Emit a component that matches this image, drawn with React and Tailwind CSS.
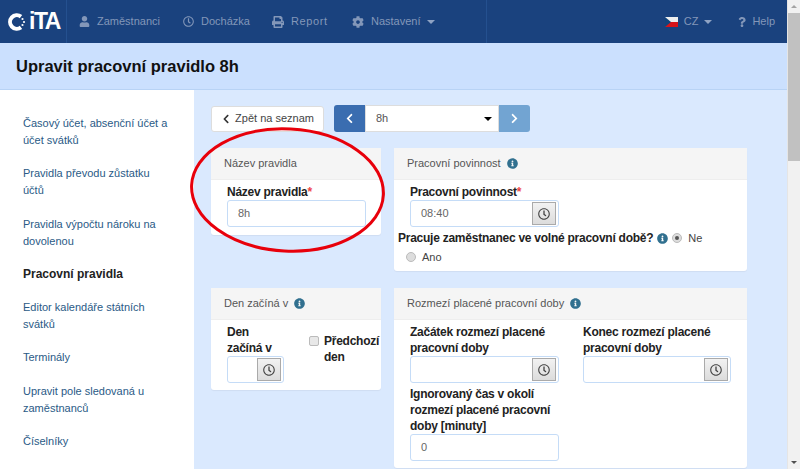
import { FaUser, FaRegClock, FaPrint, FaCog, FaQuestion, FaInfoCircle, FaChevronLeft, FaChevronRight } from 'react-icons/fa';

const Caret = ({ className = 'border-t-[#8fa3c4]' }) => (
  <span className={`inline-block w-0 h-0 border-x-[4px] border-x-transparent border-t-[4px] ${className}`} />
);

const Logo = () => (
  <div className="flex items-center gap-[3px] pl-[8px] w-[66px] h-full">
    <svg width="18" height="18" viewBox="0 0 18 18">
      <path d="M13 3.6 A6.8 6.8 0 1 0 13 14.4" fill="none" stroke="#fff" strokeWidth="4" />
      <circle cx="14.5" cy="6" r="1.1" fill="#fff" />
      <circle cx="16" cy="9" r="1.1" fill="#fff" />
      <circle cx="14.5" cy="12" r="1.1" fill="#fff" />
    </svg>
    <span className="text-white font-bold text-[23px] leading-none tracking-[-1.5px]">iTA</span>
  </div>
);

const NavItem = ({ icon, children, className = '' }) => (
  <div className={`flex items-center gap-[7px] text-[11px] text-[#8397b9] ${className}`}>
    {icon}
    <span>{children}</span>
  </div>
);

const TopNav = () => (
  <nav className="flex items-center h-[43px] bg-[#1a427e] shrink-0">
    <div className="border-r border-[#24508f] h-full">
      <Logo />
    </div>
    <div className="flex items-center h-full w-[420px] border-r border-[#24508f] pl-[12px]">
      <NavItem icon={<FaUser className="w-[11px] h-[11px]" />} className="w-[104px]">Zaměstnanci</NavItem>
      <NavItem icon={<FaRegClock className="w-[11px] h-[11px]" />} className="w-[89px]">Docházka</NavItem>
      <NavItem icon={<FaPrint className="w-[12px] h-[12px]" />} className="w-[80px]">
        <span className="tracking-[0.6px]">Report</span>
      </NavItem>
      <NavItem icon={<FaCog className="w-[12px] h-[12px]" />}>
        <span className="inline-flex items-center gap-[6px]">Nastavení <Caret /></span>
      </NavItem>
    </div>
    <div className="flex-1 flex items-center justify-end h-full pr-[12px]">
      <div className="flex items-center gap-[6px] text-[11px] text-[#8397b9]">
        <span className="relative w-[13px] h-[10px] bg-[linear-gradient(#eee_50%,#d7141a_50%)] overflow-hidden">
          <span className="absolute left-0 top-0 w-0 h-0 border-y-[5px] border-y-transparent border-l-[6px] border-l-[#11457e]" />
        </span>
        <span className="inline-flex items-center gap-[6px]">CZ <Caret /></span>
      </div>
      <div className="flex items-center gap-[6px] ml-[26px] text-[11px] text-[#8397b9]">
        <FaQuestion className="w-[8px] h-[10px]" />
        <span>Help</span>
      </div>
    </div>
  </nav>
);

const sideItems = [
  'Časový účet, absenční účet a účet svátků',
  'Pravidla převodu zůstatku účtů',
  'Pravidla výpočtu nároku na dovolenou',
  'Pracovní pravidla',
  'Editor kalendáře státních svátků',
  'Terminály',
  'Upravit pole sledovaná u zaměstnanců',
  'Číselníky',
];

const Sidebar = () => (
  <aside className="w-[194px] shrink-0 bg-white pl-[23px] pr-[21px] pt-[25px] flex flex-col gap-[16.3px] text-[11px] leading-[17px]">
    {sideItems.map((item) => (
      <a key={item} className={item === 'Pracovní pravidla' ? 'font-bold text-[12px] text-[#222]' : 'text-[#2a5a86]'}>
        {item}
      </a>
    ))}
  </aside>
);

const Panel = ({ title, info, children, className = '' }) => (
  <section className={`bg-white rounded-[3px] shadow-[0_1px_1px_rgba(0,0,0,0.05)] ${className}`}>
    <header className="h-[32px] bg-[#f5f5f5] border-b border-[#eee] flex items-center gap-[6px] px-[13px] text-[11px] text-[#555]">
      {title}
      {info && <FaInfoCircle className="w-[11px] h-[11px] text-[#31708f]" />}
    </header>
    {children}
  </section>
);

const Label = ({ children, required, className = '' }) => (
  <label className={`block font-bold text-[12px] leading-[16px] tracking-[-0.25px] text-[#222] ${className}`}>
    {children}
    {required && <span className="text-[#e44]">*</span>}
  </label>
);

const TextBox = ({ value, className = '' }) => (
  <div className={`h-[27px] border border-[#c5dcf7] rounded-[3px] bg-white flex items-center px-[10px] text-[11px] text-[#666] ${className}`}>
    {value}
  </div>
);

const TimeBox = ({ value, className = '' }) => (
  <div className={`h-[27px] border border-[#c5dcf7] rounded-[3px] bg-white flex items-center justify-between pl-[10px] pr-[2px] text-[11px] text-[#666] ${className}`}>
    <span>{value}</span>
    <span className="w-[24px] h-[23px] bg-[linear-gradient(#f2f2f2,#dcdcdc)] border border-[#aaa] flex items-center justify-center text-[#444]">
      <FaRegClock className="w-[12px] h-[12px]" />
    </span>
  </div>
);

const Radio = ({ checked }) => (
  <span className="w-[10px] h-[10px] rounded-full bg-[#ddd] border border-[#bbb] flex items-center justify-center shrink-0">
    {checked && <span className="w-[4px] h-[4px] rounded-full bg-[#555]" />}
  </span>
);

const Toolbar = () => (
  <div className="flex items-center h-[27px] mb-[16px]">
    <button className="h-[26px] w-[113px] bg-white border border-[#ddd] rounded-[3px] flex items-center justify-center gap-[4px] text-[11px] text-[#444] mr-[10px]">
      <FaChevronLeft className="w-[10px] h-[10px] text-[#333]" />
      Zpět na seznam
    </button>
    <button className="h-[27px] w-[31px] bg-[#3a6db0] rounded-l-[3px] flex items-center justify-center text-white">
      <FaChevronLeft className="w-[11px] h-[11px]" />
    </button>
    <div className="h-[27px] w-[134px] bg-white border border-[#ddd] flex items-center justify-between pl-[10px] pr-[6px] text-[11px] text-[#555]">
      8h
      <Caret className="border-t-black" />
    </div>
    <button className="h-[27px] w-[31px] bg-[#72a4d2] rounded-r-[3px] flex items-center justify-center text-white">
      <FaChevronRight className="w-[11px] h-[11px]" />
    </button>
  </div>
);

const Content = () => (
  <main className="flex-1 bg-[#dae9fe] pl-[17px] pt-[15px] overflow-hidden">
    <Toolbar />
    <div className="grid grid-cols-[170px_353px] gap-x-[13px] gap-y-[17px] items-start">
      <Panel title="Název pravidla">
        <div className="px-[16px] pt-[4px] pb-[8px]">
          <Label required>Název pravidla</Label>
          <TextBox value="8h" className="w-[139px]" />
        </div>
      </Panel>

      <Panel title="Pracovní povinnost" info className="h-[123px]">
        <div className="pt-[4px]">
          <div className="px-[16px]">
            <Label required>Pracovní povinnost</Label>
            <TimeBox value="08:40" className="w-[149px]" />
          </div>
          <div className="pl-[4px] mt-[3px] flex items-center gap-[4px] h-[16px]">
            <Label>Pracuje zaměstnanec ve volné pracovní době?</Label>
            <FaInfoCircle className="w-[11px] h-[11px] text-[#31708f]" />
            <Radio checked />
            <span className="text-[11px] text-[#444] ml-[2px]">Ne</span>
          </div>
          <div className="pl-[12px] mt-[3px] flex items-center gap-[6px] text-[11px] text-[#444]">
            <Radio />
            Ano
          </div>
        </div>
      </Panel>

      <Panel title="Den začíná v" info className="h-[102px]">
        <div className="flex pl-[16px] pt-[4px]">
          <div className="w-[57px]">
            <Label>Den začíná v</Label>
            <TimeBox className="w-[57px]" />
          </div>
          <div className="flex gap-[5px] pl-[25px] pt-[9px]">
            <span className="w-[10px] h-[10px] mt-[3px] bg-[#e8e8e8] border border-[#bbb] rounded-[2px] shrink-0" />
            <Label className="w-[58px]">Předchozí den</Label>
          </div>
        </div>
      </Panel>

      <Panel title="Rozmezí placené pracovní doby" info className="h-[180px]">
        <div className="grid grid-cols-[173px_149px] pl-[16px] pt-[4px]">
          <div>
            <Label className="w-[160px]">Začátek rozmezí placené pracovní doby</Label>
            <TimeBox className="w-[149px]" />
            <Label className="w-[149px] mt-[3px]">Ignorovaný čas v okolí rozmezí placené pracovní doby [minuty]</Label>
            <TextBox value="0" className="w-[149px]" />
          </div>
          <div>
            <Label>Konec rozmezí placené pracovní doby</Label>
            <TimeBox className="w-[148px]" />
          </div>
        </div>
      </Panel>
    </div>
  </main>
);

const Scrollbar = () => (
  <div className="w-[13px] shrink-0 bg-[#f1f1f1] flex flex-col items-center border-l border-[#e5e5e5]">
    <span className="mt-[5px] mb-[5px] w-0 h-0 border-x-[3px] border-x-transparent border-b-[3px] border-b-[#a3a3a3]" />
    <span className="w-full h-[148px] bg-[#c1c1c1]" />
    <span className="mt-auto mb-[5px] w-0 h-0 border-x-[3px] border-x-transparent border-t-[3px] border-t-[#505050]" />
  </div>
);

const App = () => (
  <div className="relative flex w-[800px] h-[469px] overflow-hidden font-['Liberation_Sans',Arial,sans-serif]">
    <div className="flex-1 flex flex-col min-w-0">
      <TopNav />
      <div className="h-[47px] shrink-0 bg-[#cbe0fe] border-b border-[#b8d3f5] flex items-center pl-[16px] text-[16.5px] font-bold text-[#111]">
        Upravit pracovní pravidlo 8h
      </div>
      <div className="flex flex-1 min-h-0">
        <Sidebar />
        <Content />
      </div>
    </div>
    <Scrollbar />
    {/* red hand-drawn ellipse over the first panel */}
    <svg className="absolute left-[190px] top-[124px] pointer-events-none" width="200" height="132" viewBox="0 0 200 132">
      <ellipse cx="97.5" cy="66" rx="96" ry="61" transform="rotate(3 97.5 66)" fill="none" stroke="#e8000b" strokeWidth="3" />
    </svg>
  </div>
);

export default App;
